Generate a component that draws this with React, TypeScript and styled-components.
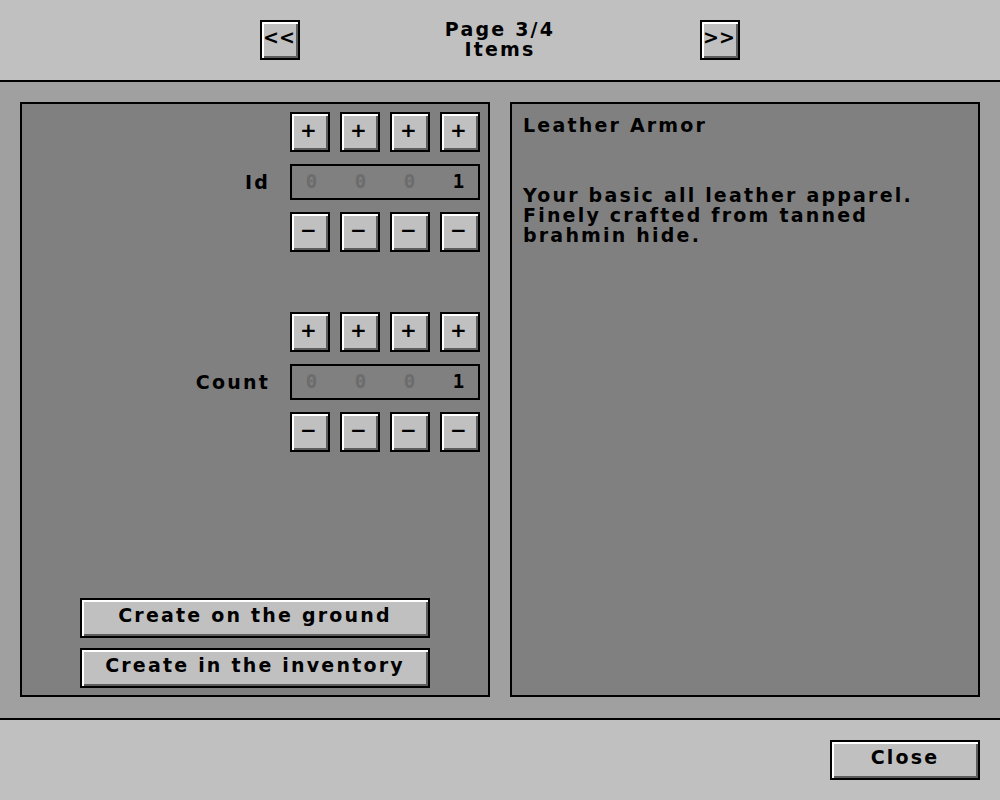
import React, { useState } from 'react';
import styled, { createGlobalStyle } from 'styled-components';

const GlobalStyle = createGlobalStyle`
  html, body {
    margin : 0;
    padding : 0;
    background : #a0a0a0;
  }
  body {
    font-family : "DejaVu Sans", "Liberation Sans", sans-serif;
    font-weight : bold;
    font-size : 19px;
    letter-spacing : 2.2px;
    color : #000;
  }
`;

const Screen = styled.div`
  width : 1000px;
  height : 800px;
  display : flex;
  flex-direction : column;
  background : #a0a0a0;
`;

const Header = styled.div`
  height : 80px;
  flex : none;
  background : #c0c0c0;
  border-bottom : 2px solid #000;
  display : flex;
  justify-content : center;
  align-items : center;
`;

const Title = styled.div`
  width : 400px;
  text-align : center;
  line-height : 20px;
  padding-bottom : 3px;
`;

const Bevel = styled.button`
  box-sizing : border-box;
  border : 2px solid #000;
  background : #c0c0c0;
  box-shadow : inset 2px 2px 0 #fff, inset -2px -2px 0 #5c5c5c;
  font : inherit;
  letter-spacing : inherit;
  color : #000;
  padding : 0 0 6px 0;
  margin : 0;
  display : flex;
  align-items : center;
  justify-content : center;
  cursor : pointer;
`;

const NavButton = styled(Bevel)`
  width : 40px;
  height : 40px;
  letter-spacing : 0;
  padding-right : 2px;
`;

const Main = styled.div`
  flex : 1;
  display : flex;
  gap : 20px;
  padding : 20px 20px 21px;
`;

const Panel = styled.div`
  box-sizing : border-box;
  width : 470px;
  border : 2px solid #000;
  background : #808080;
`;

const EditorPanel = styled(Panel)`
  display : flex;
  flex-direction : column;
  align-items : flex-end;
  padding : 8px 8px 7px;
  gap : 60px;
`;

const Group = styled.div`
  display : grid;
  grid-template-columns : auto 190px;
  column-gap : 22px;
  row-gap : 12px;
  align-items : center;
`;

const Label = styled.div`
  grid-column : 1;
  grid-row : 2;
  text-align : right;
  margin-right : -2px;
`;

const StepRow = styled.div`
  grid-column : 2;
  display : flex;
  gap : 10px;
`;

const StepButton = styled(Bevel)`
  width : 40px;
  height : 40px;
  letter-spacing : 0;
  font-size : 20px;
  padding : 0 3px 5px 0;
`;

const Field = styled.div`
  grid-column : 2;
  grid-row : 2;
  box-sizing : border-box;
  height : 36px;
  border : 2px solid #000;
  display : flex;
  gap : 10px;
  padding-bottom : 2px;
`;

const Digit = styled.div<{ $dim : boolean }>`
  width : 40px;
  display : flex;
  align-items : center;
  justify-content : center;
  font-family : "DejaVu Sans Mono", monospace;
  font-size : 19px;
  letter-spacing : 0;
  color : ${p => (p.$dim ? '#6c6c6c' : '#000')};
`;

const Actions = styled.div`
  margin-top : auto;
  align-self : center;
  display : flex;
  flex-direction : column;
  gap : 10px;
`;

const WideButton = styled(Bevel)`
  width : 350px;
  height : 40px;
`;

const InfoPanel = styled(Panel)`
  padding : 11px 11px;
  line-height : 20px;
`;

const ItemName = styled.div``;

const ItemText = styled.div`
  margin-top : 50px;
  white-space : pre-line;
`;

const Footer = styled.div`
  height : 80px;
  flex : none;
  background : #c0c0c0;
  border-top : 2px solid #000;
  display : flex;
  justify-content : flex-end;
  align-items : center;
  padding : 0 20px;
`;

const CloseButton = styled(Bevel)`
  width : 150px;
  height : 40px;
`;

function Counter({ label, value }: { label: string; value: number }) {
  const digits = String(value).padStart(4, '0').split('');
  const firstSignificant = digits.findIndex(d => d !== '0');

  return (
    <Group>
      <StepRow>
        {[0, 1, 2, 3].map(i => <StepButton key={i}>+</StepButton>)}
      </StepRow>
      <Label>{label}</Label>
      <Field>
        {digits.map((d, i) => (
          <Digit key={i} $dim={firstSignificant === -1 ? i < 3 : i < firstSignificant}>{d}</Digit>
        ))}
      </Field>
      <StepRow>
        {[0, 1, 2, 3].map(i => <StepButton key={i}>−</StepButton>)}
      </StepRow>
    </Group>
  );
}

export default function App() {
  const [id] = useState(1);
  const [count] = useState(1);

  return (
    <>
      <GlobalStyle />
      <Screen>
        <Header>
          <NavButton>&lt;&lt;</NavButton>
          <Title>
            <div>Page 3/4</div>
            <div>Items</div>
          </Title>
          <NavButton>&gt;&gt;</NavButton>
        </Header>

        <Main>
          <EditorPanel>
            <Counter label="Id" value={id} />
            <Counter label="Count" value={count} />
            <Actions>
              <WideButton>Create on the ground</WideButton>
              <WideButton>Create in the inventory</WideButton>
            </Actions>
          </EditorPanel>

          <InfoPanel>
            <ItemName>Leather Armor</ItemName>
            <ItemText>
              {'Your basic all leather apparel.\nFinely crafted from tanned\nbrahmin hide.'}
            </ItemText>
          </InfoPanel>
        </Main>

        <Footer>
          <CloseButton>Close</CloseButton>
        </Footer>
      </Screen>
    </>
  );
}
